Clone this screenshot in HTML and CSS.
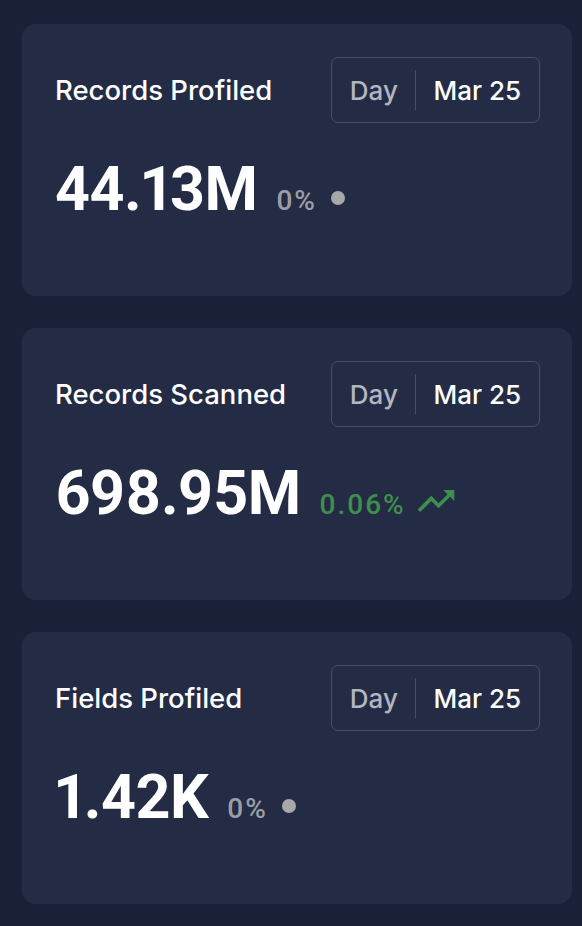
FILE: index.html
```html
<!DOCTYPE html>
<html>
<head>
<meta charset="utf-8">
<link rel="stylesheet" href="styles.css">
</head>
<body>
<div class="list">
  <div class="card">
    <div class="head">
      <div class="title">Records Profiled</div>
      <div class="range"><span class="day">Day</span><span class="sep"></span><span class="date">Mar 25</span></div>
    </div>
    <div class="value-row"><span class="value">44.13M</span><span class="delta neutral">0%</span><span class="dot"></span></div>
  </div>
  <div class="card">
    <div class="head">
      <div class="title">Records Scanned</div>
      <div class="range"><span class="day">Day</span><span class="sep"></span><span class="date">Mar 25</span></div>
    </div>
    <div class="value-row"><span class="value">698.95M</span><span class="delta up">0.06%</span><svg class="trend" viewBox="0 0 24 24" width="44" height="44"><path fill="#3e8e4d" d="M16 6l2.29 2.29-4.88 4.88-4-4L2 16.59 3.41 18l6-6 4 4 6.3-6.29L22 12V6z"/></svg></div>
  </div>
  <div class="card">
    <div class="head">
      <div class="title">Fields Profiled</div>
      <div class="range"><span class="day">Day</span><span class="sep"></span><span class="date">Mar 25</span></div>
    </div>
    <div class="value-row"><span class="value">1.42K</span><span class="delta neutral">0%</span><span class="dot"></span></div>
  </div>
</div>
</body>
</html>
```

FILE: styles.css
```css
html, body {
  margin: 0;
  padding: 0;
  background: #1b2039;
}
body {
  font-family: Inter, "Noto Sans", sans-serif;
  color: #ffffff;
}
.list {
  display: flex;
  flex-direction: column;
  gap: 32px;
  padding: 24px 10px 22px 22px;
}
.card {
  background: #242c45;
  border-radius: 14px;
  height: 272px;
  box-sizing: border-box;
  padding: 33px 32px 0 33px;
}
.head {
  display: flex;
  justify-content: space-between;
  align-items: center;
}
.title {
  font-size: 27.5px;
  font-weight: 500;
}
.range {
  display: flex;
  align-items: center;
  height: 66px;
  box-sizing: border-box;
  border: 1.5px solid #474e65;
  border-radius: 7px;
  padding: 0 18px;
  font-size: 26px;
  font-weight: 500;
}
.day {
  color: #b3b6c0;
}
.sep {
  width: 1.5px;
  height: 40px;
  background: #474e65;
  margin: 0 17px;
}
.date {
  color: #ffffff;
}
.value-row {
  margin-top: 35px;
  line-height: 62px;
  white-space: nowrap;
}
.value {
  font-family: Roboto, sans-serif;
  font-size: 61px;
  font-weight: 700;
  font-variant-numeric: proportional-nums;
  letter-spacing: -0.5px;
}
.delta {
  font-family: Roboto, sans-serif;
  font-size: 28px;
  font-weight: 500;
  margin-left: 19px;
  letter-spacing: 2px;
}
.neutral {
  color: #9c9ea6;
}
.up {
  color: #3e8e4d;
}
.dot {
  display: inline-block;
  width: 14px;
  height: 14px;
  border-radius: 50%;
  background: #a8a8ab;
  margin-left: 14px;
  vertical-align: 5px;
}
.trend {
  margin-left: 8px;
  vertical-align: -9px;
}
```
